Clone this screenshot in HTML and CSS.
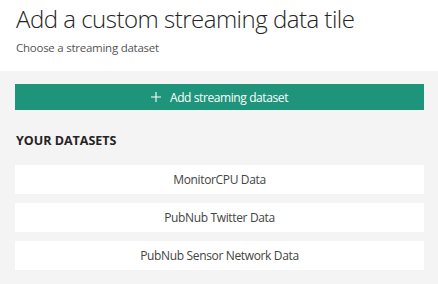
FILE: index.html
```html
<!DOCTYPE html>
<html lang="en">
<head>
    <meta charset="UTF-8">
    <title>Add a custom streaming data tile</title>
    <link rel="stylesheet" href="styles.css">
</head>
<body>
    <!-- Header -->
    <div class="header">
        <h1>Add a custom streaming data tile</h1>
        <p>Choose a streaming dataset</p>
    </div>

    <!-- Datasets -->
    <div class="content">
        <button class="add-button" type="button">
            <svg width="10" height="10" viewBox="0 0 10 10"><path d="M5 0v10M0 5h10" stroke="#fff" stroke-width="1.1"/></svg>
            <span>Add streaming dataset</span>
        </button>

        <h3>YOUR DATASETS</h3>

        <div class="dataset-list">
            <div class="dataset">MonitorCPU Data</div>
            <div class="dataset">PubNub Twitter Data</div>
            <div class="dataset">PubNub Sensor Network Data</div>
        </div>
    </div>
</body>
</html>
```

FILE: styles.css
```css
/* Global Styles */
body {
    margin: 0;
    font-family: 'Open Sans', 'Noto Sans', sans-serif;
    background-color: #f4f4f4;
    color: #333;
}

/* Header */
.header {
    background-color: #ffffff;
    height: 71px;
    padding: 0 16px;
    box-sizing: border-box;
}

.header h1 {
    margin: 0;
    padding-top: 3px;
    font-size: 24px;
    font-weight: 300;
    line-height: 32px;
    letter-spacing: -0.5px;
    color: #252423;
}

.header p {
    margin: 5px 0 0;
    font-size: 11.5px;
    line-height: 16px;
    letter-spacing: -0.25px;
    color: #555;
}

/* Content */
.content {
    padding: 13px 14px 0 15px;
}

.add-button {
    width: 100%;
    height: 26px;
    display: flex;
    align-items: center;
    justify-content: center;
    gap: 9px;
    border: none;
    background-color: #1e957b;
    color: #ffffff;
    font-family: inherit;
    font-size: 12px;
    letter-spacing: -0.4px;
    padding: 0;
}

.content h3 {
    margin: 22px 0 0 1px;
    font-size: 12.5px;
    font-weight: 700;
    line-height: 18px;
    color: #252423;
}

.dataset-list {
    display: flex;
    flex-direction: column;
    gap: 9px;
    margin-top: 15px;
}

.dataset {
    background-color: #ffffff;
    height: 29px;
    display: flex;
    align-items: center;
    justify-content: center;
    font-size: 12px;
    letter-spacing: -0.35px;
    color: #444;
}
```
